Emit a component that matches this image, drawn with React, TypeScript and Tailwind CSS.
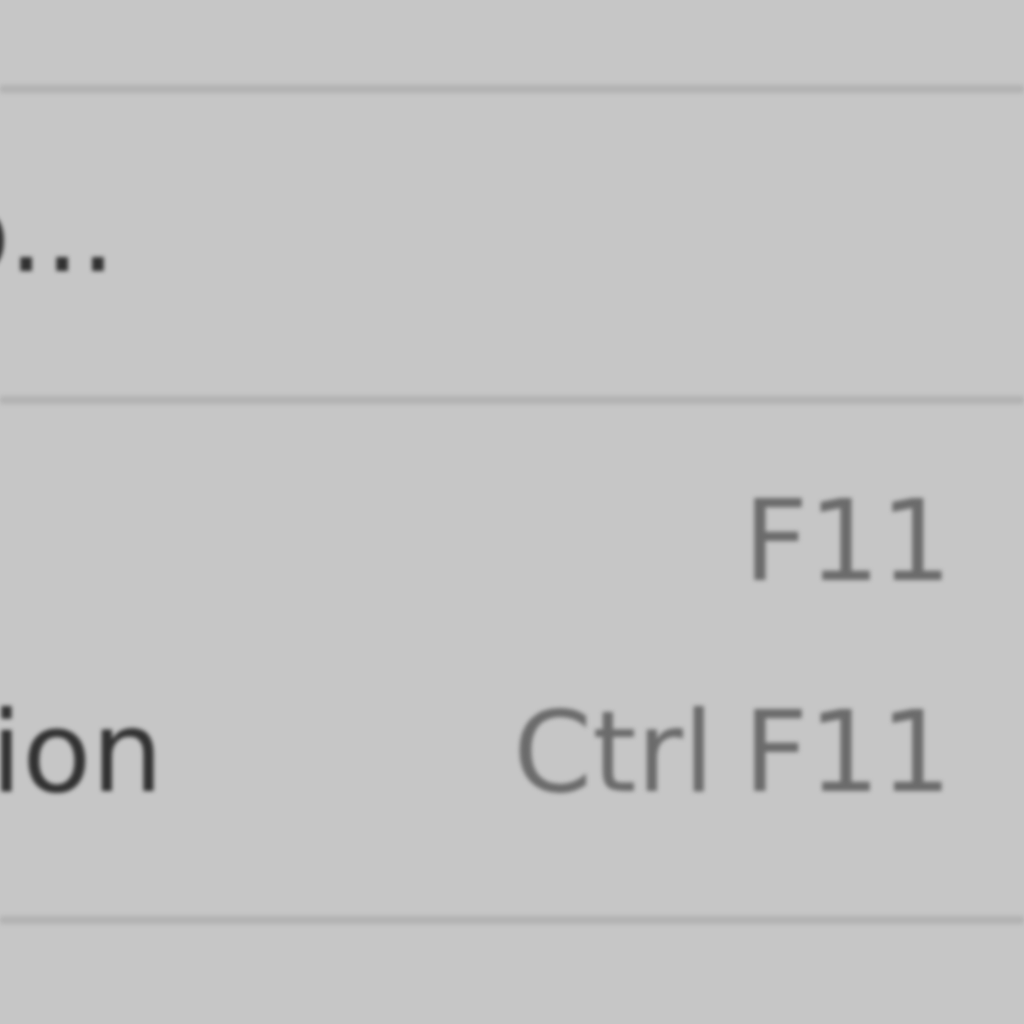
import React from 'react';

function Separator() {
  return <div className="h-[8px] bg-[#b2b2b2] shrink-0" />;
}

function Item({ label, labelEnd, shortcut }: { label: string; labelEnd: string; shortcut?: string }) {
  return (
    <div className="h-[211px] flex items-center justify-between pr-[72px] pb-[27px]">
      <div className={`${labelEnd} flex justify-end whitespace-nowrap text-[#313131]`}>
        <span>{label}</span>
      </div>
      {shortcut && <span className="text-[#6b6b6b] whitespace-nowrap [word-spacing:-7px]">{shortcut}</span>}
    </div>
  );
}

export default function App() {
  return (
    <div
      className="w-[1024px] h-[1024px] overflow-hidden bg-[#c6c6c6] text-[113px] leading-none"
      style={{ fontFamily: '"DejaVu Sans", sans-serif' }}
    >
      <div className="flex flex-col blur-[2px]">
        <div className="h-[85px]" />
        <Separator />
        <div className="pt-[47px] pb-[45px] flex flex-col">
          <Item label="Zoom To..." labelEnd="w-[116px]" />
        </div>
        <Separator />
        <div className="py-[45px] flex flex-col">
          <Item label="Full Screen" labelEnd="w-[2px]" shortcut="F11" />
          <Item label="Presentation" labelEnd="w-[163px]" shortcut="Ctrl F11" />
        </div>
        <Separator />
      </div>
    </div>
  );
}
